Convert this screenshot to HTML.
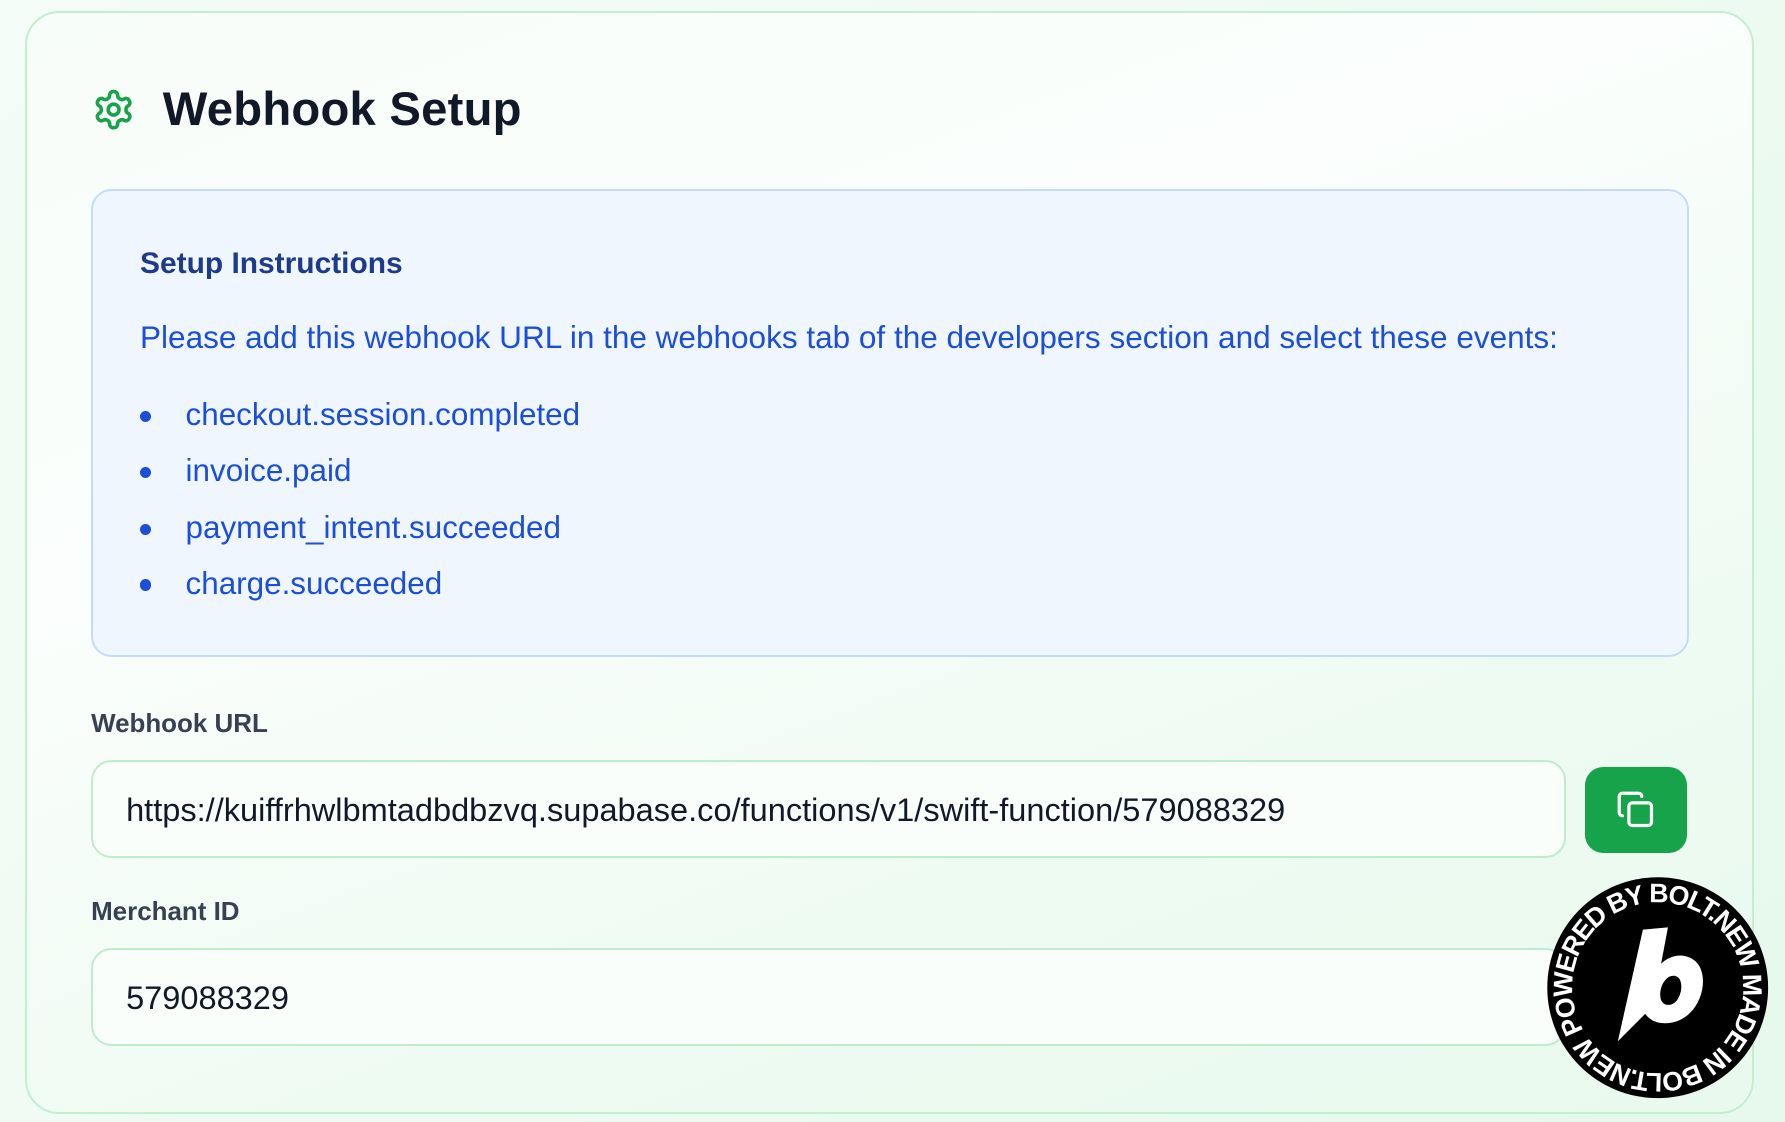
<!DOCTYPE html>
<html><head><meta charset="utf-8">
<style>
html,body{margin:0;padding:0;overflow:hidden}
body{width:1785px;height:1122px;background:linear-gradient(135deg,#f3fcf6 0%,#eefbf2 50%,#e6f9ec 100%);font-family:"Liberation Sans",sans-serif}
#w{zoom:1.13838;width:1568px;height:986px;position:relative}
.card{position:absolute;left:22px;top:10px;width:1515px;height:965px;border:2px solid #c3eed0;border-radius:30px;background:linear-gradient(160deg,#f7fdf9 0%,#fbfefc 35%,#eefbf2 70%,#e9f9ee 100%);}
.gear{position:absolute;left:81px;top:77px}
h1{position:absolute;left:143px;top:72px;margin:0;font-size:41.5px;font-weight:bold;color:#111827;letter-spacing:0.2px}
.box{position:absolute;left:80px;top:166px;width:1400px;height:408px;border:2px solid #c3dcfb;border-radius:18px;background:#eff6fe}
.t{position:absolute;left:123px;top:217px;font-size:26.3px;font-weight:bold;color:#1e3a8a;margin:0}
.p{position:absolute;left:123px;top:280px;font-size:27.7px;color:#1d4ed8;white-space:nowrap}
.li{position:absolute;left:163px;font-size:27.6px;color:#1d4ed8}
.dot{position:absolute;left:123px;width:10px;height:10px;border-radius:50%;background:#1d4ed8}
.lab{position:absolute;left:80px;font-size:22.8px;font-weight:bold;color:#374151}
.inp{position:absolute;left:80px;width:1296px;height:86px;border:2px solid #bfeccd;border-radius:18px;background:#f9fefb;box-sizing:border-box}
.inp span{position:absolute;left:29px;top:26px;font-size:28.6px;color:#111827;white-space:nowrap}
.btn{position:absolute;left:1392px;top:674px;width:90px;height:75px;border-radius:16px;background:#16a34a}
.badge{position:absolute;left:1357px;top:769px}
</style></head><body><div id="w">
<div class="card"></div>
<svg class="gear" width="38" height="38" viewBox="0 0 24 24" fill="none" stroke="#16a34a" stroke-width="2" stroke-linecap="round" stroke-linejoin="round"><path d="M12.22 2h-.44a2 2 0 0 0-2 2v.18a2 2 0 0 1-1 1.73l-.43.25a2 2 0 0 1-2 0l-.15-.08a2 2 0 0 0-2.730.73l-.22.38a2 2 0 0 0 .73 2.730l.15.1a2 2 0 0 1 1 1.72v.51a2 2 0 0 1-1 1.74l-.15.09a2 2 0 0 0-.73 2.73l.22.38a2 2 0 0 0 2.73.73l.15-.08a2 2 0 0 1 2 0l.43.25a2 2 0 0 1 1 1.73V20a2 2 0 0 0 2 2h.44a2 2 0 0 0 2-2v-.18a2 2 0 0 1 1-1.73l.43-.25a2 2 0 0 1 2 0l.15.08a2 2 0 0 0 2.73-.73l.22-.39a2 2 0 0 0-.73-2.730l-.15-.08a2 2 0 0 1-1-1.74v-.5a2 2 0 0 1 1-1.74l.15-.09a2 2 0 0 0 .73-2.730l-.22-.38a2 2 0 0 0-2.73-.73l-.15.08a2 2 0 0 1-2 0l-.43-.25a2 2 0 0 1-1-1.73V4a2 2 0 0 0-2-2z"/><circle cx="12" cy="12" r="3"/></svg>
<h1>Webhook Setup</h1>
<div class="box"></div>
<div class="t">Setup Instructions</div>
<div class="p">Please add this webhook URL in the webhooks tab of the developers section and select these events:</div>
<div class="dot" style="top:361px"></div><div class="li" style="top:349px">checkout.session.completed</div>
<div class="dot" style="top:410px"></div><div class="li" style="top:398px">invoice.paid</div>
<div class="dot" style="top:460px"></div><div class="li" style="top:448px">payment_intent.succeeded</div>
<div class="dot" style="top:509px"></div><div class="li" style="top:497px">charge.succeeded</div>
<div class="lab" style="top:624px">Webhook URL</div>
<div class="inp" style="top:668px"><span>https://kuiffrhwlbmtadbdbzvq.supabase.co/functions/v1/swift-function/579088329</span></div>
<div class="btn"><svg style="position:absolute;left:28px;top:20px" width="34" height="34" viewBox="0 0 24 24" fill="none" stroke="#fff" stroke-width="2" stroke-linecap="round" stroke-linejoin="round"><rect x="8" y="8" width="14" height="14" rx="2"/><path d="M4 16c-1.1 0-2-.9-2-2V4c0-1.1.9-2 2-2h10c1.1 0 2 .9 2 2"/></svg></div>
<div class="lab" style="top:789px">Merchant ID</div>
<div class="inp" style="top:833px"><span>579088329</span></div>
<svg class="badge" width="198" height="198" viewBox="0 0 198 198">
<defs><path id="cp" d="M34,136.5 A75,75 0 1,1 164,61.5 A75,75 0 1,1 34,136.5"/></defs>
<circle cx="99" cy="99" r="97" fill="#000"/>
<text font-family="Liberation Sans,sans-serif" font-size="23.5" font-weight="600" fill="#fff"><textPath href="#cp" textLength="466" lengthAdjust="spacing">POWERED BY BOLT.NEW MADE IN BOLT.NEW </textPath></text>
<path d="M86,48 L108,46 L102,78 C108,72 116,70 122,71 C135,73 141,85 138,101 C134,120 119,132 102,130 C95,129 91,126 88,122 L64,146 Z M106,92 C102,96 100,104 102,110 C105,116 112,115 116,110 C120,104 121,96 118,91 C115,87 109,88 106,92 Z" fill="#fff" fill-rule="evenodd"/>
</svg>
</div></body></html>
